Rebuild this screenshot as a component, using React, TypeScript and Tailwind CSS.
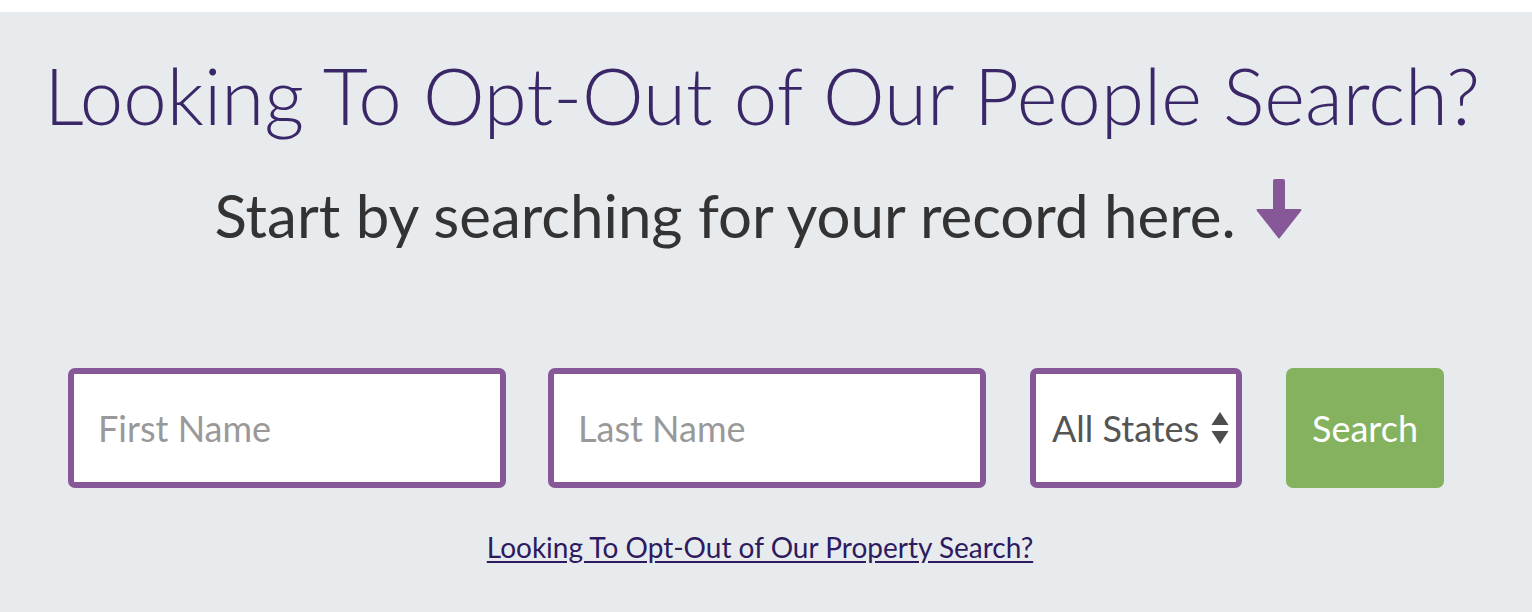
import { useState } from 'react';

const font = { fontFamily: 'Lato, "Open Sans", sans-serif' };

const DownArrow = () => (
  <svg width="46" height="60" viewBox="0 0 46 60" className="ml-5 shrink-0">
    <path d="M17 2a2 2 0 0 1 2-2h8a2 2 0 0 1 2 2v28h15.5a1 1 0 0 1 .7 1.7L23.8 59a1 1 0 0 1-1.6 0L.8 31.7A1 1 0 0 1 1.5 30H17z" fill="#865897" />
  </svg>
);

const SortArrows = () => (
  <svg width="18" height="32" viewBox="0 0 18 32" className="shrink-0">
    <path d="M9 0l8.5 13H.5z" fill="#4d4d4d" />
    <path d="M.5 19h17L9 32z" fill="#4d4d4d" />
  </svg>
);

export default function App() {
  const [first, setFirst] = useState('');
  const [last, setLast] = useState('');

  return (
    <div className="min-h-[612px] bg-white pt-3" style={font}>
      <div className="flex min-h-[600px] flex-col items-center bg-[#e8ebee]">
        <h1 className="mt-[37px] mr-[8px] text-[78px] leading-[1.2] font-light text-[#3a2767]">
          Looking To Opt-Out of Our People Search?
        </h1>

        <h2 className="mt-[36px] mr-[16px] flex items-end text-[60px] leading-[1.2] text-[#333]">
          <span>Start by searching for your record here.</span>
          <span className="mb-[12px]"><DownArrow /></span>
        </h2>

        <form className="mt-[117px] mr-[20px] flex items-stretch gap-[42px]" onSubmit={(e) => e.preventDefault()}>
          <input
            value={first}
            onChange={(e) => setFirst(e.target.value)}
            placeholder="First Name"
            className="h-[120px] w-[438px] rounded-[7px] border-[6px] border-[#865897] bg-white px-6 text-[36px] text-[#555] outline-none placeholder:text-[#999]"
          />
          <input
            value={last}
            onChange={(e) => setLast(e.target.value)}
            placeholder="Last Name"
            className="h-[120px] w-[438px] rounded-[7px] border-[6px] border-[#865897] bg-white px-6 text-[36px] text-[#555] outline-none placeholder:text-[#999]"
          />
          <div className="ml-[2px] flex h-[120px] w-[212px] items-center gap-[12px] rounded-[7px] border-[6px] border-[#865897] bg-white pl-4 text-[36px] text-[#555]">
            <span>All States</span>
            <SortArrows />
          </div>
          <button
            type="submit"
            className="ml-[2px] h-[120px] w-[158px] rounded-[7px] bg-[#84b25e] text-[36px] text-white"
          >
            Search
          </button>
        </form>

        <a href="#" className="mt-[38px] mr-[12px] text-[28px] text-[#2e1a5e] underline underline-offset-[3px]">
          Looking To Opt-Out of Our Property Search?
        </a>
      </div>
    </div>
  );
}
